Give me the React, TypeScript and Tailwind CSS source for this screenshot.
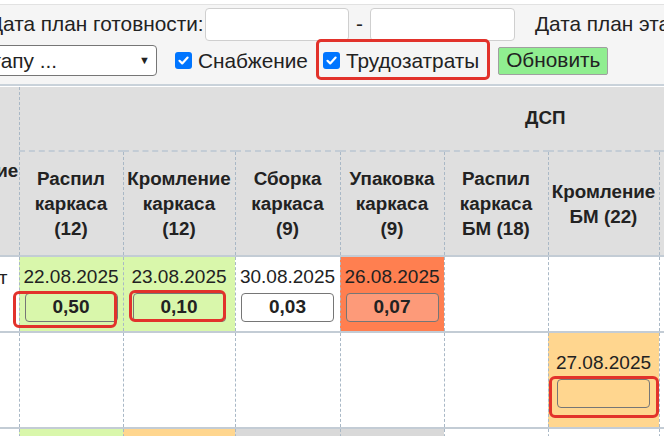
import React from 'react';

type Cell = {
  date?: string;
  value?: string;
  bg?: string;
  inputBg?: string;
};

const headers = [
  ['Распил', 'каркаса', '(12)'],
  ['Кромление', 'каркаса', '(12)'],
  ['Сборка', 'каркаса', '(9)'],
  ['Упаковка', 'каркаса', '(9)'],
  ['Распил', 'каркаса', 'БМ (18)'],
  ['Кромление', 'БМ (22)'],
];

const row1: Cell[] = [
  { date: '22.08.2025', value: '0,50', bg: 'bg-[#d9f7ab]', inputBg: 'bg-[#d9f7ab]' },
  { date: '23.08.2025', value: '0,10', bg: 'bg-[#d9f7ab]', inputBg: 'bg-[#d9f7ab]' },
  { date: '30.08.2025', value: '0,03', bg: 'bg-white', inputBg: 'bg-white' },
  { date: '26.08.2025', value: '0,07', bg: 'bg-[#ff7f50]', inputBg: 'bg-[#fd9a79]' },
  {},
  {},
];

const row2: Cell[] = [
  {},
  {},
  {},
  {},
  {},
  { date: '27.08.2025', value: '', bg: 'bg-[#ffd68f]', inputBg: 'bg-[#ffd68f]' },
];

const row3bg = ['bg-[#d9f7ab]', 'bg-[#ffd68f]', 'bg-[#d9d9d9]', 'bg-[#d9d9d9]', 'bg-white', 'bg-white'];

const vline = 'border-l border-dashed border-l-[#a9b8c6]';

function DataCell({ cell }: { cell: Cell }) {
  return (
    <td className={`${vline} ${cell.bg || 'bg-white'} p-0 align-middle text-center`}>
      {cell.date && (
        <div className="flex flex-col items-center">
          <div className="text-[19px] leading-[22px] text-[#222]">{cell.date}</div>
          <div
            className={`mt-[5px] w-[93px] h-[29px] rounded-[4px] border border-[#767676] ${cell.inputBg} flex items-center justify-center font-bold text-[19px] text-[#222]`}
          >
            {cell.value}
          </div>
        </div>
      )}
    </td>
  );
}

function Check({ label }: { label: string }) {
  return (
    <label className="flex items-center gap-[6px] whitespace-nowrap">
      <span className="w-[17px] h-[17px] shrink-0 rounded-[3px] bg-[#0075ff] flex items-center justify-center">
        <svg width="13" height="13" viewBox="0 0 13 13">
          <path d="M2.5 6.8 L5.2 9.4 L10.6 3.6" stroke="white" strokeWidth="2.2" fill="none" strokeLinecap="round" strokeLinejoin="round" />
        </svg>
      </span>
      <span>{label}</span>
    </label>
  );
}

export default function App() {
  return (
    <div className="relative w-[664px] h-[436px] overflow-hidden bg-white font-['Liberation_Sans',Arial,sans-serif] text-[#222]">
      {/* toolbar */}
      <div className="mt-[4px] h-[82px] bg-[#f5f5f5] border-t border-[#e2e2e2] border-b-2 border-b-[#c9d2da] text-[20.8px]">
        <div className="flex items-center h-[38px]">
          <span className="ml-[-11px] w-[216px] shrink-0 whitespace-nowrap">Дата план готовности:</span>
          <div className="w-[144px] h-[33px] shrink-0 bg-white border border-[#cfcfcf] rounded-[4px]" />
          <span className="w-[21px] shrink-0 text-center">-</span>
          <div className="w-[145px] h-[33px] shrink-0 bg-white border border-[#cfcfcf] rounded-[4px]" />
          <span className="ml-[20px] shrink-0 whitespace-nowrap">Дата план этапа:</span>
        </div>
        <div className="flex items-center h-[35px]">
          <div className="ml-[-60px] w-[217px] h-[31px] bg-white border border-[#767676] rounded-[4px] flex items-center justify-between pl-[8px] pr-[6px] shrink-0">
            <span className="whitespace-nowrap">По этапу ...</span>
            <span className="text-[11px]">▼</span>
          </div>
          <div className="ml-[18px] shrink-0">
            <Check label="Снабжение" />
          </div>
          <div className="ml-[15px] shrink-0">
            <Check label="Трудозатраты" />
          </div>
          <button className="ml-[19px] w-[110px] h-[28px] shrink-0 bg-[#90ee90] border border-[#a0a0a0] rounded-[2px] text-[20.8px] leading-none text-[#222]">
            Обновить
          </button>
        </div>
      </div>

      {/* table */}
      <table className="mt-[1px] ml-[-61px] table-fixed border-collapse w-[1132px]">
        <colgroup>
          <col className="w-[80px]" />
          <col className="w-[104px]" />
          <col className="w-[112px]" />
          <col className="w-[105px]" />
          <col className="w-[104px]" />
          <col className="w-[104px]" />
          <col className="w-[111px]" />
          <col className="w-[412px]" />
        </colgroup>
        <thead>
          <tr className="h-[64px] bg-[#dfdfdf]">
            <th rowSpan={2} className="p-0 font-bold text-[18.8px] text-center">Изделие</th>
            <th colSpan={7} className={`${vline} border-b-2 border-b-[#c3ccd5] p-0 font-bold text-[18.8px] text-center`}>
              ДСП
            </th>
          </tr>
          <tr className="h-[105px] bg-[#dfdfdf]">
            {headers.map((h, i) => (
              <th key={i} className={`${vline} p-0 font-bold text-[18.8px] leading-[25px] text-center align-middle`}>
                {h.map((l, j) => (
                  <div key={j}>{l}</div>
                ))}
              </th>
            ))}
            <th className={`${vline} p-0`} />
          </tr>
        </thead>
        <tbody>
          <tr className="h-[76px] border-t-2 border-[#c3ccd5]">
            <td className="p-0 align-top bg-white">
              <div className="flex justify-end pt-[7px] pr-[11px] text-[19px] whitespace-nowrap">Комплект</div>
            </td>
            {row1.map((c, i) => (
              <DataCell key={i} cell={c} />
            ))}
            <td className={`${vline} bg-white`} />
          </tr>
          <tr className="h-[96px] border-t-2 border-[#c3ccd5]">
            <td className="p-0 bg-white" />
            {row2.map((c, i) => (
              <DataCell key={i} cell={c} />
            ))}
            <td className={`${vline} bg-white`} />
          </tr>
          <tr className="h-[30px] border-t-2 border-[#c3ccd5]">
            <td className="p-0 bg-white" />
            {row3bg.map((b, i) => (
              <td key={i} className={`${vline} ${b}`} />
            ))}
            <td className={`${vline} bg-white`} />
          </tr>
        </tbody>
      </table>

      {/* red highlight annotations */}
      <div className="absolute left-[316px] top-[39px] w-[174px] h-[41px] rounded-[5px] border-[3px] border-[#e2322b]" />
      <div className="absolute left-[13px] top-[291px] w-[104px] h-[37px] rounded-[6px] border-[3px] border-[#e2322b]" />
      <div className="absolute left-[129px] top-[290px] w-[97px] h-[32px] rounded-[6px] border-[3px] border-[#e2322b]" />
      <div className="absolute left-[549px] top-[376px] w-[110px] h-[42px] rounded-[6px] border-[3px] border-[#e2322b]" />
    </div>
  );
}
